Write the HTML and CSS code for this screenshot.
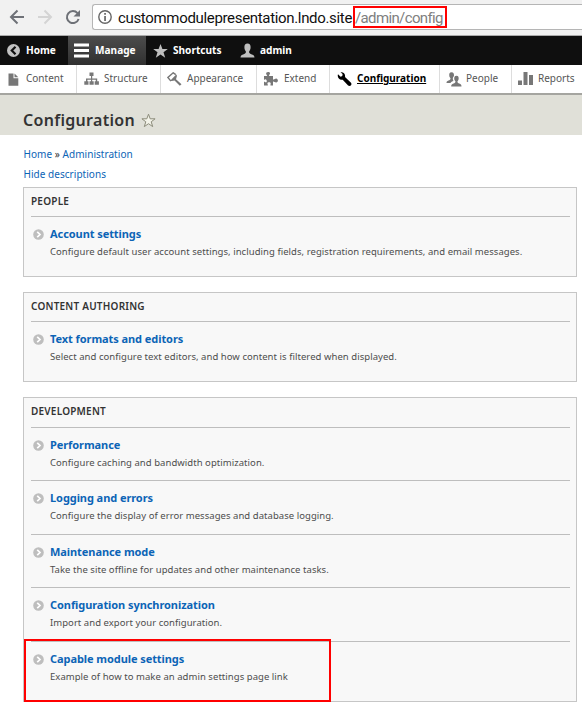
FILE: index.html
```html
<!DOCTYPE html>
<html lang="en">
<head>
<meta charset="utf-8">
<title>Configuration</title>
<link rel="stylesheet" href="styles.css">
</head>
<body>
<svg width="0" height="0" class="defs" aria-hidden="true">
  <symbol id="bullet" viewBox="0 0 11 11"><circle cx="5.5" cy="5.5" r="5.3" fill="#bebebe"/><path d="M4.2 2.8 7 5.5 4.2 8.2" fill="none" stroke="#fff" stroke-width="1.7"/></symbol>
</svg>
<div class="browser">
  <svg class="nav" width="92" height="35" fill="none" stroke="#6e7177" stroke-width="2">
    <path d="M24 17H11.500M17.500 10.500 11 17l6.500 6.500"/>
    <path d="M38 17h12.500M44.500 10.500 51 17l-6.500 6.500" stroke="#d4d4d4"/>
    <path d="M77.500 13.200A6 6 0 1 0 78.600 19"/><path d="M80 10v6.500h-6.500z" fill="#6e7177" stroke="none"/>
  </svg>
  <div class="address">
    <svg class="info" width="14" height="14" viewBox="0 0 14 14"><circle cx="7" cy="7" r="6.200" fill="none" stroke="#666" stroke-width="1.400"/><path d="M6.200 3h1.700v1.700H6.200zM6.200 6h1.700v5H6.200z" fill="#666"/></svg>
    <span class="host">custommodulepresentation.lndo.site</span><span class="path">/admin/config</span>
  </div>
</div>
<nav class="toolbar">
  <a class="tab tab-home"><svg width="13" height="13" viewBox="0 0 13 13"><circle cx="6.500" cy="6.500" r="6.500" fill="#c3c3c3"/><path d="M8.500 2.800 4.800 6.500l3.700 3.700" fill="none" stroke="#111" stroke-width="2.200"/></svg><span>Home</span></a>
  <a class="tab tab-manage"><svg width="15" height="15" viewBox="0 0 15 15"><path d="M0 .5h15v3H0zM0 6h15v3H0zM0 11.500h15v3H0z" fill="#fff"/></svg><span>Manage</span></a>
  <a class="tab tab-shortcuts"><svg width="15" height="14" viewBox="0 0 15 14"><path d="m7.500 0 1.900 5h5.400l-4.300 3.300 1.700 5.500-4.700-3.300-4.700 3.300 1.700-5.500L.2 5h5.400z" fill="#bebebe"/></svg><span>Shortcuts</span></a>
  <a class="tab tab-user"><svg width="15" height="15" viewBox="0 0 15 15"><path d="M7.500.5C5.300.5 4.300 2 4.400 4.200c0 1.700.6 3 1.400 4 .3 1.300-.1 2-1.100 2.500C2.500 11.700.5 12 .5 14.500h14c0-2.500-2-2.800-4.200-3.800-1-.5-1.400-1.200-1.100-2.500.8-1 1.400-2.300 1.400-4C10.700 2 9.700.5 7.500.5z" fill="#bebebe"/></svg><span>admin</span></a>
</nav>
<nav class="tray">
  <a class="item i1"><svg width="11" height="13" viewBox="0 0 11 13"><path d="M.5.5h5v4.700h4.800v7.500H.5zM6.500.5l3.800 3.700H6.500z" fill="#777"/></svg><span>Content</span></a>
  <a class="item i2"><svg width="15" height="14" viewBox="0 0 15 14"><path d="M5.500 .5h4v3.500h-4z M7 3.500h1.200v6H7z M2 6.500h11.200v3h-1.400V7.800H3.400v1.700H2z M.3 9.300h4.200v3.500H.3z M5.500 9.300h4.200v3.500H5.500z M10.700 9.300h4.200v3.500h-4.200z" fill="#777"/></svg><span>Structure</span></a>
  <a class="item i3"><svg width="15" height="14" viewBox="0 0 15 14"><path d="M8.800 2.600 6.200.8.9 5.500l3 3.600" fill="none" stroke="#777" stroke-width="1.400"/><path d="M3.200 8.800 9.200 2.500l.8 1.300-1 3.500 5.500 5-1.700 1.500-5.300-5.200-2.800.5z" fill="#777"/></svg><span>Appearance</span></a>
  <a class="item i4"><svg width="16" height="14" viewBox="0 0 16 14"><path d="M1 4h3.300C4 2.800 2.700 2 3.300.8c.8-1.100 3.300-1 3.700.2.300 1.100-1 1.800-1 3h4v3.600c1.200.2 2-1.200 3.200-1.200 2 0 2.600 4-.1 4.200-1.200 0-2-1.200-3.100-1v3.900H7.500c-.3-1.200.8-2.200-.3-2.900-.8-.5-2.600-.4-2.800.7-.1.900.7 1.300.4 2.200H1V9.800c.9-.2 1.500 1 2.400.5.600-.6.500-2.500-.3-2.900C2.300 7 1.800 8 1 7.800z" fill="#777"/></svg><span>Extend</span></a>
  <a class="item i5 current"><svg width="15" height="15" viewBox="0 0 15 15"><path d="M1 2.300 3.600 4.800 5.300 4 5.600 2.100 3.500.3C6.500-.2 8.600 2 8 5.100l6 5.700c1.500 2-1 4.300-2.900 2.800L5.700 7.700C2.500 8.600-.1 5.500 1 2.300z" fill="#000"/></svg><span>Configuration</span></a>
  <a class="item i6"><svg width="16" height="15" viewBox="0 0 16 15"><path d="M5.500.3C3.500.3 3 2 3.300 4c.1 1 .8 1.700 1.200 2.300 0 1.500-.8 1.800-2 2.200C1 9 .5 9.500.5 11h4c.5-1.200 1.700-1.500 3-2-.9-1.700-1.100-3.500.5-5C8.200 2 7.500.3 5.500.3z" fill="#777"/><path d="M10.500 3.700c-2 0-2.500 1.700-2.200 3.500.1 1 .8 1.700 1.200 2.300 0 1-.8 1.600-2 2-1.500.5-2.300 1-2.300 3h10.300c0-2-.8-2.500-2.200-3-1.200-.4-1.900-1-1.900-2 .5-.6 1-1.300 1.200-2.300.3-1.800-.1-3.500-2.100-3.500z" fill="#777"/></svg><span>People</span></a>
  <a class="item i7"><svg width="15" height="14" viewBox="0 0 15 14"><path d="M0 8.500h4V13H0zM5.500 0h4v13h-4zM11 3h4v10h-4z" fill="#777"/></svg><span>Reports</span></a>
</nav>
<header class="page-header"><h1>Configuration</h1><svg width="15" height="15" viewBox="0 0 15 15"><path d="m7.500 1.200 1.700 4.600h4.900l-3.900 3 1.500 4.800-4.200-2.900-4.200 2.900 1.500-4.800-3.900-3h4.900z" fill="#f3f3e9" stroke="#8c8c7b"/></svg></header>
<main>
  <div class="crumbs"><a>Home</a> » <a>Administration</a></div>
  <div class="toggle"><a>Hide descriptions</a></div>
  <section class="panel">
    <h2>PEOPLE</h2>
    <div class="entry"><svg class="dot"><use href="#bullet"/></svg><div><a class="name">Account settings</a><p>Configure default user account settings, including fields, registration requirements, and email messages.</p></div></div>
  </section>
  <section class="panel">
    <h2>CONTENT AUTHORING</h2>
    <div class="entry"><svg class="dot"><use href="#bullet"/></svg><div><a class="name">Text formats and editors</a><p>Select and configure text editors, and how content is filtered when displayed.</p></div></div>
  </section>
  <section class="panel development">
    <h2>DEVELOPMENT</h2>
    <div class="entry"><svg class="dot"><use href="#bullet"/></svg><div><a class="name">Performance</a><p>Configure caching and bandwidth optimization.</p></div></div>
    <div class="entry"><svg class="dot"><use href="#bullet"/></svg><div><a class="name">Logging and errors</a><p>Configure the display of error messages and database logging.</p></div></div>
    <div class="entry"><svg class="dot"><use href="#bullet"/></svg><div><a class="name">Maintenance mode</a><p>Take the site offline for updates and other maintenance tasks.</p></div></div>
    <div class="entry"><svg class="dot"><use href="#bullet"/></svg><div><a class="name">Configuration synchronization</a><p>Import and export your configuration.</p></div></div>
    <div class="entry marked"><svg class="dot"><use href="#bullet"/></svg><div><a class="name">Capable module settings</a><p>Example of how to make an admin settings page link</p></div></div>
  </section>
</main>
</body>
</html>
```
FILE: styles.css
```css
*, *::after { box-sizing: border-box; }
body { margin: 0; width: 582px; height: 710px; overflow: hidden; background: #fff; font-family: "Noto Sans", sans-serif; color: #333; }
svg { display: block; flex: none; }
.defs { position: absolute; }
h1, h2, p { margin: 0; }
.browser { display: flex; height: 36px; background: #f1f1f1; border-bottom: 1px solid #aaa; }
.address { display: flex; align-items: center; flex: 1; height: 26px; margin-top: 4px; padding-left: 5px; background: #fff; border: 1px solid #b5b5b5; border-right: 0; border-radius: 3px 0 0 3px; font: 15px/24px Roboto, sans-serif; color: #111; white-space: nowrap; }
.host { margin-left: 6px; width: 235px; padding-top: 1px; letter-spacing: -.33px; }
.path { width: 94px; height: 22px; line-height: 20px; border: 2px solid #f00; color: #808080; letter-spacing: -.63px; }
.toolbar { display: flex; height: 29px; background: #0f0f0f; color: #fff; font: bold 10.1px/28px "Noto Sans", sans-serif; }
.tab { display: flex; align-items: center; white-space: nowrap; }
.tab span { height: 28px; line-height: 27px; }
.tab-home { width: 68px; padding-left: 7px; gap: 6px; }
.tab-manage { width: 78px; padding-left: 6px; gap: 6px; background: linear-gradient(#4c4c4c, #303030); }
.tab-shortcuts { width: 94px; padding-left: 7px; gap: 5px; }
.tab-user { gap: 5px; }
.tray { display: flex; height: 30px; border-bottom: 2px solid #a5a5a0; background: #fff; font: 10px/28px "Noto Sans", sans-serif; color: #565656; }
.item { display: flex; align-items: center; border-right: 1px solid #ddd; white-space: nowrap; }
.item span { line-height: 27px; height: 28px; }
.i1 { width: 77px; padding-left: 8px; gap: 7px; }
.i2 { width: 84px; padding-left: 7px; gap: 5px; }
.i3 { width: 96px; padding-left: 6px; gap: 5px; }
.i4 { width: 73px; padding-left: 6px; gap: 5px; }
.i5 { width: 110px; padding-left: 7px; gap: 5px; }
.i6 { width: 72px; padding-left: 6px; gap: 4px; }
.i7 { width: 70px; padding-left: 6px; gap: 5px; border: 0; }
.current { color: #000; font-weight: bold; text-decoration: underline; }
.page-header { display: flex; align-items: center; gap: 6px; height: 40px; padding: 10px 0 0 23px; background: #e0e0d8; }
h1 { font: 600 16px/24px "Noto Sans", sans-serif; letter-spacing: .3px; }
main { padding: 9px 5px 0 23px; }
a { color: inherit; }
.crumbs, .toggle { height: 20px; padding-left: .5px; font-size: 10px; line-height: 20px; letter-spacing: .04px; }
.crumbs a, .toggle a, .name { color: #0c64b6; }
.toggle { margin-bottom: 3px; }
.panel { height: 90px; margin-bottom: 15px; padding: 0 6px 0 7px; background: #f8f8f8; border: 1px solid #c6c6c6; }
h2 { height: 28px; font: 600 10px/27px "Noto Sans", sans-serif; letter-spacing: .22px; }
.entry { display: flex; height: 53.5px; padding: 8px 0 0 1.5px; border-top: 1px solid #bebebe; }
.dot { width: 11px; height: 11px; margin: 4px 6.5px 0 0; }
.name { display: block; height: 19px; font: bold 11px/18px "Noto Sans", sans-serif; letter-spacing: -.07px; }
p { font-size: 9.5px; line-height: 16px; white-space: nowrap; color: #4d4d4d; letter-spacing: .05px; }
.development { height: 305px; }
.development h2 { height: 28.6px; }
.marked { position: relative; }
.marked::after { content: ""; position: absolute; left: -7px; top: -3px; width: 307px; height: 63px; border: 2px solid #f00; }
```
